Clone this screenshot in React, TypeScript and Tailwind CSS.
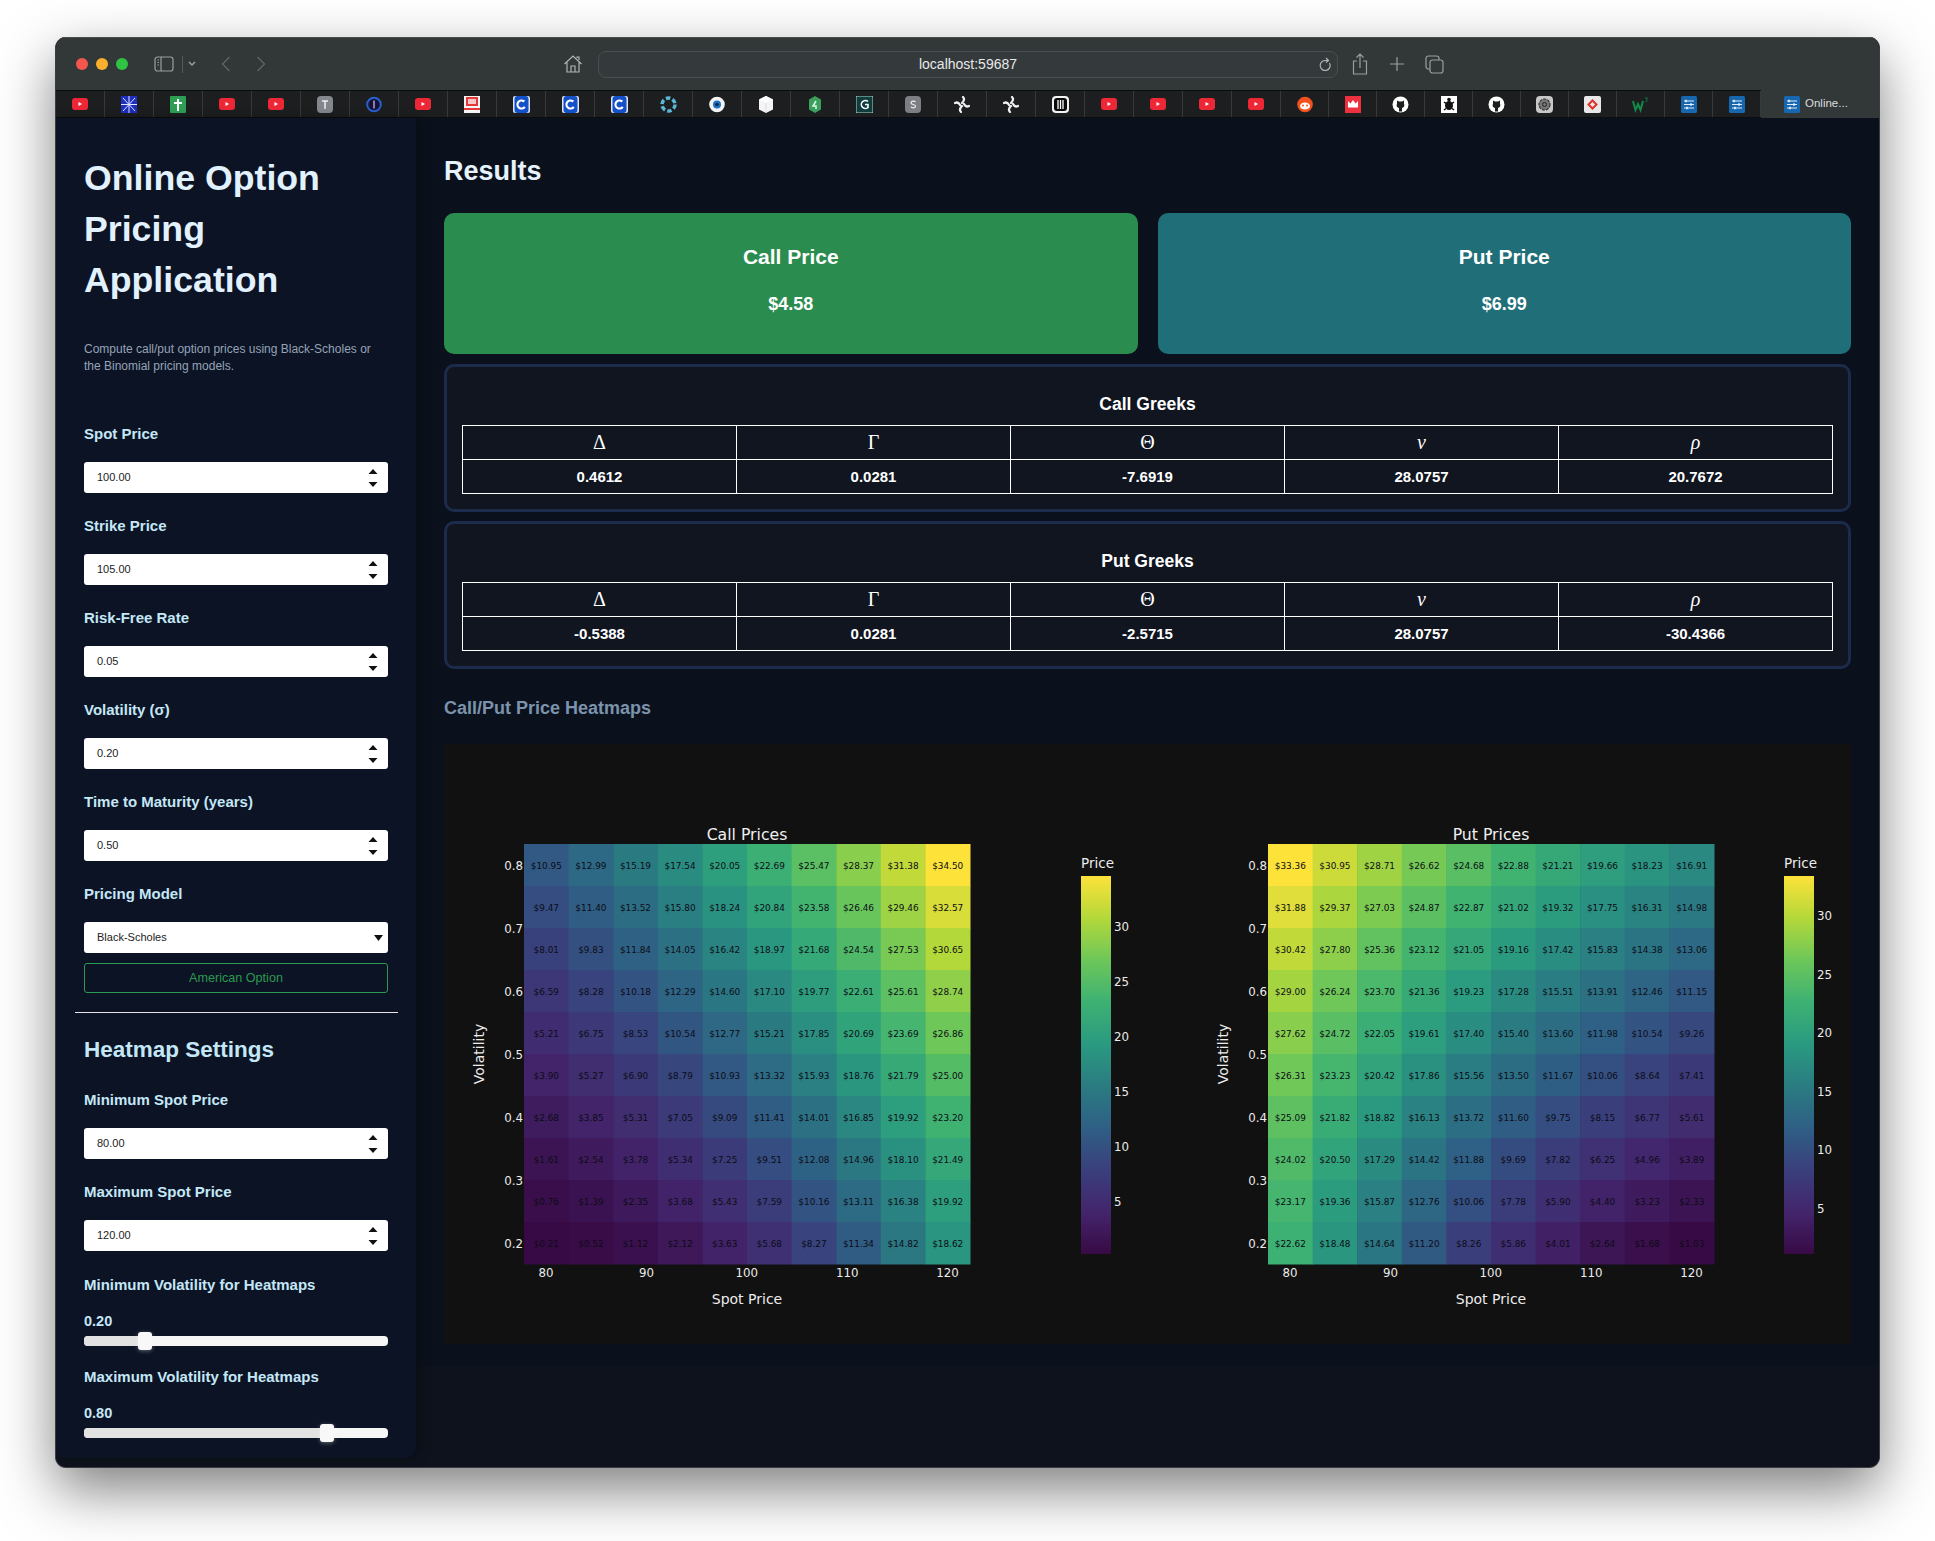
import * as React from "react";

const SANS = "font-['Liberation_Sans',Arial,sans-serif]";

const callRows = [
  [10.95, 12.99, 15.19, 17.54, 20.05, 22.69, 25.47, 28.37, 31.38, 34.5],
  [9.47, 11.4, 13.52, 15.8, 18.24, 20.84, 23.58, 26.46, 29.46, 32.57],
  [8.01, 9.83, 11.84, 14.05, 16.42, 18.97, 21.68, 24.54, 27.53, 30.65],
  [6.59, 8.28, 10.18, 12.29, 14.6, 17.1, 19.77, 22.61, 25.61, 28.74],
  [5.21, 6.75, 8.53, 10.54, 12.77, 15.21, 17.85, 20.69, 23.69, 26.86],
  [3.9, 5.27, 6.9, 8.79, 10.93, 13.32, 15.93, 18.76, 21.79, 25.0],
  [2.68, 3.85, 5.31, 7.05, 9.09, 11.41, 14.01, 16.85, 19.92, 23.2],
  [1.61, 2.54, 3.78, 5.34, 7.25, 9.51, 12.08, 14.96, 18.1, 21.49],
  [0.76, 1.39, 2.35, 3.68, 5.43, 7.59, 10.16, 13.11, 16.38, 19.92],
  [0.21, 0.52, 1.12, 2.12, 3.63, 5.68, 8.27, 11.34, 14.82, 18.62],
];

const putRows = [
  [33.36, 30.95, 28.71, 26.62, 24.68, 22.88, 21.21, 19.66, 18.23, 16.91],
  [31.88, 29.37, 27.03, 24.87, 22.87, 21.02, 19.32, 17.75, 16.31, 14.98],
  [30.42, 27.8, 25.36, 23.12, 21.05, 19.16, 17.42, 15.83, 14.38, 13.06],
  [29.0, 26.24, 23.7, 21.36, 19.23, 17.28, 15.51, 13.91, 12.46, 11.15],
  [27.62, 24.72, 22.05, 19.61, 17.4, 15.4, 13.6, 11.98, 10.54, 9.26],
  [26.31, 23.23, 20.42, 17.86, 15.56, 13.5, 11.67, 10.06, 8.64, 7.41],
  [25.09, 21.82, 18.82, 16.13, 13.72, 11.6, 9.75, 8.15, 6.77, 5.61],
  [24.02, 20.5, 17.29, 14.42, 11.88, 9.69, 7.82, 6.25, 4.96, 3.89],
  [23.17, 19.36, 15.87, 12.76, 10.06, 7.78, 5.9, 4.4, 3.23, 2.33],
  [22.62, 18.48, 14.64, 11.2, 8.26, 5.86, 4.01, 2.64, 1.68, 1.03],
];

// viridis as it appears in the screenshot
const ramp: [number, number, number][] = [
  [0x38, 0x0a, 0x45],
  [0x43, 0x25, 0x6c],
  [0x3a, 0x3f, 0x7c],
  [0x2f, 0x5f, 0x85],
  [0x2a, 0x7c, 0x82],
  [0x2a, 0x9a, 0x80],
  [0x3d, 0xb1, 0x73],
  [0x6d, 0xc7, 0x59],
  [0xb4, 0xd8, 0x3a],
  [0xfd, 0xe2, 0x3a],
];

function viridis(t: number) {
  const p = Math.max(0, Math.min(1, t)) * (ramp.length - 1);
  const i = Math.min(Math.floor(p), ramp.length - 2);
  const f = p - i;
  const c = ramp[i].map((v, k) => Math.round(v + (ramp[i + 1][k] - v) * f));
  return `rgb(${c[0]},${c[1]},${c[2]})`;
}

const CELL_W = 44.6;
const CELL_H = 42;
const chartFont = "'DejaVu Sans', Verdana, sans-serif";

function Heatmap({
  x,
  barX,
  title,
  rows,
  id,
}: {
  x: number;
  barX: number;
  title: string;
  rows: number[][];
  id: string;
}) {
  const all = rows.flat();
  const min = Math.min(...all);
  const max = Math.max(...all);
  const top = 100;
  const midX = x + CELL_W * 5;
  return (
    <g fontFamily={chartFont}>
      <text x={midX} y={90} textAnchor="middle" dominantBaseline="central" fontSize={15.7} fill="#f0f0f0">
        {title}
      </text>
      {rows.map((row, r) =>
        row.map((v, c) => (
          <g key={`${r}-${c}`}>
            <rect
              x={x + c * CELL_W}
              y={top + r * CELL_H}
              width={CELL_W + 0.5}
              height={CELL_H + 0.5}
              fill={viridis((v - min) / (max - min))}
            />
            <text
              x={x + c * CELL_W + CELL_W / 2}
              y={top + r * CELL_H + 22}
              textAnchor="middle"
              dominantBaseline="central"
              fontSize={8.9}
              fill="#0c0c16"
            >
              ${v.toFixed(2)}
            </text>
          </g>
        ))
      )}
      {["0.8", "0.7", "0.6", "0.5", "0.4", "0.3", "0.2"].map((t, i) => (
        <text key={t} x={x - 1} y={122 + i * 63} textAnchor="end" dominantBaseline="central" fontSize={11.8} fill="#ececec">
          {t}
        </text>
      ))}
      {["80", "90", "100", "110", "120"].map((t, i) => (
        <text key={t} x={x + 22 + i * 100.4} y={529} textAnchor="middle" dominantBaseline="central" fontSize={11.8} fill="#ececec">
          {t}
        </text>
      ))}
      <text x={midX} y={555} textAnchor="middle" dominantBaseline="central" fontSize={14} fill="#ececec">
        Spot Price
      </text>
      <text
        x={x - 45}
        y={310}
        textAnchor="middle"
        dominantBaseline="central"
        fontSize={14}
        fill="#ececec"
        transform={`rotate(-90 ${x - 45} 310)`}
      >
        Volatility
      </text>
      <text x={barX} y={119} dominantBaseline="central" fontSize={13.5} fill="#ececec">
        Price
      </text>
      <rect x={barX} y={132} width={30} height={378} fill={`url(#${id})`} />
      <defs>
        <linearGradient id={id} x1="0" y1="1" x2="0" y2="0">
          {ramp.map((c, i) => (
            <stop key={i} offset={i / (ramp.length - 1)} stopColor={`rgb(${c[0]},${c[1]},${c[2]})`} />
          ))}
        </linearGradient>
      </defs>
      {[30, 25, 20, 15, 10, 5].map((v) => (
        <text
          key={v}
          x={barX + 33}
          y={511 - ((v - min) / (max - min)) * 378}
          dominantBaseline="central"
          fontSize={11.8}
          fill="#ececec"
        >
          {v}
        </text>
      ))}
    </g>
  );
}

const yt = (
  <svg width="16" height="12" viewBox="0 0 16 12">
    <rect width="16" height="12" rx="3" fill="#ee2736" />
    <path d="M6.5 4l3.5 2-3.5 2z" fill="#fff" />
  </svg>
);

const cIcon = (
  <svg width="17" height="17" viewBox="0 0 17 17">
    <rect width="17" height="17" rx="2" fill="#dfe5f2" />
    <rect x="1.5" width="14" height="17" rx="3" fill="#1450c8" />
    <circle cx="8.5" cy="8.5" r="4" fill="none" stroke="#fff" strokeWidth="2.2" strokeDasharray="19 6" transform="rotate(35 8.5 8.5)" />
  </svg>
);

const github = (
  <svg width="17" height="17" viewBox="0 0 17 17">
    <circle cx="8.5" cy="8.5" r="8" fill="#fff" />
    <path d="M5 4.5l2 1h3l2-1v3.2c1 2.3-.5 4-2 4.3v3.5H7v-3.5c-1.500-.3-3-2-2-4.300z" fill="#1c1e1f" />
  </svg>
);

const sliders = (
  <svg width="16" height="17" viewBox="0 0 16 17">
    <rect width="16" height="17" rx="1.500" fill="#1667b0" />
    <path d="M3 5h10M3 8.500h10M3 12h10" stroke="#dcebf8" strokeWidth="1.200" />
    <path d="M5 3.800v2.400M10 7.300v2.400M6 10.800v2.400" stroke="#fff" strokeWidth="1.400" />
  </svg>
);

const swirl = (
  <svg width="16" height="17" viewBox="0 0 16 17">
    <path
      d="M9 1c2 2 1 4-1 6M7 16c-2-2-1-4 1-6M1 7c2-1 4 0 5 2M15 10c-2 1-4 0-5-2"
      fill="none"
      stroke="#f2f2f2"
      strokeWidth="2.200"
      strokeLinecap="round"
    />
  </svg>
);

const favicons: React.ReactNode[] = [
  yt,
  <svg width="16" height="17" viewBox="0 0 16 17" key="star">
    <rect width="16" height="17" fill="#1f2fc0" />
    <path d="M8 0v17M0 8.500h16M2 2l12 13M14 2L2 15" stroke="#dfe6ff" strokeWidth="1" />
  </svg>,
  <svg width="16" height="17" viewBox="0 0 16 17" key="cross">
    <rect width="16" height="17" rx="1" fill="#2f9e55" />
    <path d="M8 3v12M4 7h8" stroke="#fff" strokeWidth="2" />
  </svg>,
  yt,
  yt,
  <svg width="16" height="17" viewBox="0 0 16 17" key="t">
    <rect width="16" height="17" rx="4" fill="#85878f" />
    <path d="M5 5h6M8 5v8" stroke="#eee" strokeWidth="1.500" />
  </svg>,
  <svg width="16" height="17" viewBox="0 0 16 17" key="i">
    <circle cx="8" cy="8.500" r="6.800" fill="#151238" stroke="#2a5fd0" strokeWidth="2" />
    <path d="M8 4.500v8" stroke="#d9c9ff" strokeWidth="1.200" />
  </svg>,
  yt,
  <svg width="16" height="17" viewBox="0 0 16 17" key="pc">
    <rect width="16" height="17" fill="#f4f4f4" />
    <rect x="2" y="1" width="12" height="9" fill="#e53838" />
    <rect x="4" y="3" width="8" height="5" fill="#f8c8c8" />
    <rect y="12" width="16" height="2" fill="#e53838" />
  </svg>,
  cIcon,
  cIcon,
  cIcon,
  <svg width="17" height="17" viewBox="0 0 17 17" key="dots">
    <circle cx="8.500" cy="8.500" r="6.500" fill="none" stroke="#5cb7d6" strokeWidth="3.500" strokeDasharray="4.500 2.300" />
  </svg>,
  <svg width="16" height="17" viewBox="0 0 16 17" key="eye">
    <circle cx="8" cy="8.500" r="7.800" fill="#f3f3f3" />
    <circle cx="8" cy="8.500" r="4" fill="#1d74c4" />
    <circle cx="8" cy="8.500" r="1.800" fill="#0b2a4a" />
  </svg>,
  <svg width="16" height="17" viewBox="0 0 16 17" key="cube">
    <path d="M8 0l7 3.500v10L8 17l-7-3.500v-10z" fill="#f4f4f4" />
    <path d="M8 7l7-3.500L8 0 1 3.500z" fill="#fff" />
    <path d="M8 7v10" stroke="#cfcfcf" strokeWidth=".6" />
  </svg>,
  <svg width="16" height="17" viewBox="0 0 16 17" key="hex">
    <path d="M8 0l6 3.500v10L8 17l-6-3.500v-10z" fill="#3b9f5e" />
    <path d="M9 5l-3 5h3v3" fill="none" stroke="#dff5e6" strokeWidth="1.500" />
  </svg>,
  <svg width="17" height="17" viewBox="0 0 17 17" key="g">
    <rect width="17" height="17" rx="1" fill="#0f3d3e" stroke="#dfe" strokeWidth=".8" />
    <path d="M12 5.500A4 4 0 1 0 12 11.500V8.500H9" fill="none" stroke="#fff" strokeWidth="1.600" />
  </svg>,
  <svg width="16" height="17" viewBox="0 0 16 17" key="s">
    <rect width="16" height="17" rx="4" fill="#7c7e85" />
    <path d="M10.500 6c-1-1.300-4.500-1.300-4.500.7 0 2.300 4.500 1.300 4.500 3.600 0 1.900-3.500 1.900-4.700.6" fill="none" stroke="#eee" strokeWidth="1.200" />
  </svg>,
  swirl,
  swirl,
  <svg width="17" height="17" viewBox="0 0 17 17" key="m">
    <rect width="17" height="17" rx="4" fill="#f3f3f3" />
    <rect x="2" y="2" width="13" height="13" rx="3" fill="#0a0a0a" />
    <path d="M6 4v9M8.500 4v9M11 4v9" stroke="#fff" strokeWidth="1.300" />
  </svg>,
  yt,
  yt,
  yt,
  yt,
  <svg width="16" height="17" viewBox="0 0 16 17" key="reddit">
    <circle cx="8" cy="8.500" r="7.800" fill="#f4501e" />
    <ellipse cx="8" cy="10" rx="5" ry="3.600" fill="#fff" />
    <circle cx="6" cy="9.500" r="1" fill="#f4501e" />
    <circle cx="10" cy="9.500" r="1" fill="#f4501e" />
  </svg>,
  <svg width="16" height="17" viewBox="0 0 16 17" key="crown">
    <rect width="16" height="17" fill="#ee3140" />
    <path d="M3 5l2.500 2.500L8 4l2.500 3.500L13 5v6.500H3z" fill="#fff" />
  </svg>,
  github,
  <svg width="16" height="17" viewBox="0 0 16 17" key="turtle">
    <rect width="16" height="17" fill="#fff" />
    <ellipse cx="8" cy="9.500" rx="4" ry="4.500" fill="#111" />
    <circle cx="8" cy="3.500" r="1.800" fill="#111" />
    <path d="M3 6l2 1.500M13 6l-2 1.500M3 14l2-1.500M13 14l-2-1.500" stroke="#111" strokeWidth="1.500" />
  </svg>,
  github,
  <svg width="17" height="17" viewBox="0 0 17 17" key="gpt">
    <rect width="17" height="17" rx="4" fill="#c8c8c8" />
    <circle cx="8.500" cy="8.500" r="5.500" fill="#777" stroke="#333" strokeWidth="1.200" strokeDasharray="3 1" />
    <circle cx="8.500" cy="8.500" r="2" fill="none" stroke="#222" strokeWidth="1" />
  </svg>,
  <svg width="17" height="17" viewBox="0 0 17 17" key="diamond">
    <rect width="17" height="17" rx="2" fill="#e8e8e8" />
    <path d="M8.500 4.500l4 4-4 4-4-4z" fill="none" stroke="#e0322c" strokeWidth="2" />
  </svg>,
  <svg width="17" height="17" viewBox="0 0 17 17" key="w3">
    <path d="M1 5l2.500 9 2.500-6 2.500 6L11 5" fill="none" stroke="#128a4a" strokeWidth="2" />
    <path d="M13 2h2.500l-1.200 1.500c1.500.3 1 2.500-.8 2" fill="none" stroke="#128a4a" strokeWidth=".8" />
  </svg>,
  sliders,
  sliders,
];

function ChromeIcon({ children, w = 20, h = 20 }: { children: React.ReactNode; w?: number; h?: number }) {
  return (
    <svg width={w} height={h} viewBox={`0 0 ${w} ${h}`} fill="none" stroke="#9a9e9f" strokeWidth="1.200">
      {children}
    </svg>
  );
}

function BrowserChrome() {
  return (
    <>
      <div className="flex h-[53px] items-center bg-[#323738] border-t border-[#4a4e4f] pl-[20px] shrink-0 relative">
        <span className="w-3 h-3 rounded-full bg-[#f5564e]" />
        <span className="w-3 h-3 rounded-full bg-[#f9b02e] ml-2" />
        <span className="w-3 h-3 rounded-full bg-[#2fc243] ml-2" />
        <span className="ml-[26px] flex">
          <ChromeIcon w={20} h={16}>
            <rect x="1" y="1" width="18" height="14" rx="2.500" />
            <path d="M7 1v14M3.500 4h1.500M3.500 6.500h1.500M3.500 9h1.500" />
          </ChromeIcon>
        </span>
        <span className="ml-[8px] w-px h-[17px] bg-[#55595a]" />
        <span className="ml-[5px] flex">
          <ChromeIcon w={8} h={6}>
            <path d="M1 1l3 3 3-3" strokeWidth="1.500" />
          </ChromeIcon>
        </span>
        <span className="ml-[25px] flex">
          <ChromeIcon w={10} h={16}>
            <path d="M8.500 1L1.500 8l7 7" stroke="#636768" />
          </ChromeIcon>
        </span>
        <span className="ml-[25px] flex">
          <ChromeIcon w={10} h={16}>
            <path d="M1.500 1l7 7-7 7" stroke="#636768" />
          </ChromeIcon>
        </span>
        <span className="ml-[297px] flex">
          <ChromeIcon w={20} h={18}>
            <path d="M1.500 9L10 1l8.500 8M4 7.500V17h12V7.500M8 17v-6h4v6M14 3V2h2v3" stroke="#b0b3b4" />
          </ChromeIcon>
        </span>
        <div className="ml-[15px] w-[740px] h-[27px] rounded-[8px] border border-[#4a4e4f] bg-[#343a3b] flex items-center justify-center relative">
          <span className={`${SANS} text-[14px] text-[#e8e8e8]`}>localhost:59687</span>
          <span className="absolute right-[5px] top-[4px] flex">
            <ChromeIcon w={14} h={17}>
              <path d="M11.500 7A5 5 0 1 1 7 4.500h3M8 2l2.500 2.500L8 6.500" stroke="#b0b3b4" />
            </ChromeIcon>
          </span>
        </div>
        <span className="ml-[14px] flex">
          <ChromeIcon w={16} h={22}>
            <path d="M5 8H1.500v13h13V8H11M8 15V1.500M4.500 4.500L8 1l3.500 3.500" />
          </ChromeIcon>
        </span>
        <span className="ml-[21px] flex">
          <ChromeIcon w={16} h={16}>
            <path d="M8 1v14M1 8h14" />
          </ChromeIcon>
        </span>
        <span className="ml-[20px] flex">
          <ChromeIcon w={19} h={19}>
            <rect x="1" y="1" width="13" height="13" rx="2.500" />
            <rect x="5" y="5" width="13" height="13" rx="2.500" fill="#323738" />
          </ChromeIcon>
        </span>
      </div>
      <div className="flex h-[28px] bg-[#1c1e1f] border-y border-[#0b0c0c] shrink-0">
        {favicons.map((icon, i) => (
          <div
            key={i}
            className={`${i < 25 ? "w-[49px]" : "w-[48px]"} flex items-center justify-center border-r border-[#37393a] shrink-0`}
          >
            {icon}
          </div>
        ))}
        <div className="flex-1 bg-[#323738] flex items-center pl-[23px] gap-[5px] -my-px">
          {sliders}
          <span className={`${SANS} text-[11.5px] text-[#dcdcdc]`}>Online...</span>
        </div>
      </div>
    </>
  );
}

function FieldLabel({ children }: { children: React.ReactNode }) {
  return <div className="h-5 leading-[18px] text-[15px] font-bold text-[#c4e7f7] whitespace-nowrap">{children}</div>;
}

function NumberField({ label, value }: { label: string; value: string }) {
  return (
    <div className="mb-6">
      <FieldLabel>{label}</FieldLabel>
      <div className="mt-[17px] h-[31px] bg-white rounded-[3px] flex items-center justify-between pl-[13px] pr-[10px]">
        <span className="text-[11px] text-[#222]">{value}</span>
        <svg width="10" height="20" viewBox="0 0 10 20" fill="#111">
          <path d="M5 1l4.500 5h-9zM5 19l4.500-5h-9z" />
        </svg>
      </div>
    </div>
  );
}

function Slider({ label, value }: { label: string; value: number }) {
  return (
    <div className="mb-[21px]">
      <div className="h-5 leading-5 text-[15px] font-bold text-[#c4e7f7] whitespace-nowrap">{label}</div>
      <div className="mt-[16px] h-[20px] leading-5 text-[14.5px] font-bold text-[#c4e7f7]">{value.toFixed(2)}</div>
      <div className="relative mt-[5px] h-[10px] rounded-[4px] bg-[#f6f6f6]">
        <div className="h-full rounded-l-[4px] bg-[#e2e2e2]" style={{ width: `${value * 100}%` }} />
        <div
          className="absolute -top-[4px] w-[14px] h-[18px] -ml-[7px] rounded-[3px] bg-[#f8f8f8] shadow-[0_1px_4px_rgba(255,255,255,0.35)]"
          style={{ left: `${value * 100}%` }}
        />
      </div>
    </div>
  );
}

function Sidebar() {
  return (
    <aside className={`${SANS} w-[360px] shrink-0 h-[1340px] bg-[#0c1324] rounded-b-[10px] pt-[35px] px-[28px] shadow-[4px_0_12px_rgba(0,0,0,0.3)] z-10`}>
      <h1 className="text-[35.7px] leading-[51px] font-bold text-[#e1f1fd]">
        Online Option
        <br />
        Pricing
        <br />
        Application
      </h1>
      <p className="mt-[35px] text-[12px] leading-[17px] text-[#94a3b8]">
        Compute call/put option prices using Black-Scholes or
        <br />
        the Binomial pricing models.
      </p>
      <div className="mt-[50px]">
        <NumberField label="Spot Price" value="100.00" />
        <NumberField label="Strike Price" value="105.00" />
        <NumberField label="Risk-Free Rate" value="0.05" />
        <NumberField label="Volatility (σ)" value="0.20" />
        <NumberField label="Time to Maturity (years)" value="0.50" />
        <FieldLabel>Pricing Model</FieldLabel>
        <div className="mt-[17px] h-[31px] bg-white rounded-[3px] flex items-center justify-between pl-[13px] pr-[5px]">
          <span className="text-[11px] text-[#222]">Black-Scholes</span>
          <svg width="9" height="6" viewBox="0 0 9 6" fill="#111">
            <path d="M0 0h9L4.500 6z" />
          </svg>
        </div>
        <div className="mt-[10px] h-[30px] rounded-[3px] border border-[#2a9a50] flex items-center justify-center text-[12.6px] text-[#2a9a50]">
          American Option
        </div>
        <div className="mt-[19px] -ml-[9px] -mr-[10px] h-px bg-[#e5e5e5]" />
        <h2 className="mt-[23px] h-7 leading-7 text-[22.5px] font-bold text-[#c4e7f7]">Heatmap Settings</h2>
        <div className="mt-[27px]">
          <NumberField label="Minimum Spot Price" value="80.00" />
          <NumberField label="Maximum Spot Price" value="120.00" />
          <Slider label="Minimum Volatility for Heatmaps" value={0.2} />
          <Slider label="Maximum Volatility for Heatmaps" value={0.8} />
        </div>
      </div>
    </aside>
  );
}

function GreeksCard({ title, values }: { title: string; values: string[] }) {
  const symbols: [string, string][] = [
    ["Δ", ""],
    ["Γ", ""],
    ["Θ", ""],
    ["ν", "italic"],
    ["ρ", "italic"],
  ];
  return (
    <section className="h-[148px] rounded-[10px] border-[3px] border-[#1c2b4c] bg-[#10151f] px-[15px] pt-[27px]">
      <h3 className="h-5 leading-5 text-center text-[17.500px] font-bold text-white">{title}</h3>
      <table className="mt-[11px] w-full table-fixed border-collapse text-white">
        <tbody>
          <tr className="h-[34px]">
            {symbols.map(([s, style]) => (
              <td key={s} className={`border border-white pb-[2px] text-center text-[20px] leading-none font-['Liberation_Serif',serif] ${style}`}>
                {s}
              </td>
            ))}
          </tr>
          <tr className="h-[34px]">
            {values.map((v, i) => (
              <td key={i} className="border border-white pt-[2px] text-center text-[15px] font-bold">
                {v}
              </td>
            ))}
          </tr>
        </tbody>
      </table>
    </section>
  );
}

function PriceCard({ title, value, className }: { title: string; value: string; className: string }) {
  return (
    <div className={`flex-1 h-[141px] rounded-[10px] flex flex-col items-center text-white font-bold pt-[32px] ${className}`}>
      <div className="h-6 leading-6 text-[21px]">{title}</div>
      <div className="mt-[23px] h-6 leading-6 text-[18px]">{value}</div>
    </div>
  );
}

export default function App() {
  return (
    <div className="w-[1935px] h-[1541px] bg-white pl-[55px] pt-[37px] overflow-hidden">
      <div className="w-[1825px] h-[1431px] rounded-[11px] bg-[#10131a] border-x border-b border-[#3a3d40] flex flex-col overflow-hidden shadow-[0_22px_55px_rgba(0,0,0,0.5)]">
        <BrowserChrome />
        <div className="flex flex-1 min-h-0 bg-[#0d121c]">
          <Sidebar />
          <main className={`${SANS} flex-1 min-w-0 h-[1248px] bg-[#0b111c] rounded-b-[10px] px-[28px] pt-[37px]`}>
            <h2 className="h-8 leading-8 text-[27px] font-bold text-[#e6f3fc]">Results</h2>
            <div className="mt-[26px] flex gap-[20px]">
              <PriceCard title="Call Price" value="$4.58" className="bg-[#2a8c4e]" />
              <PriceCard title="Put Price" value="$6.99" className="bg-[#1f6e78]" />
            </div>
            <div className="mt-[10px] flex flex-col gap-[9px]">
              <GreeksCard title="Call Greeks" values={["0.4612", "0.0281", "-7.6919", "28.0757", "20.7672"]} />
              <GreeksCard title="Put Greeks" values={["-0.5388", "0.0281", "-2.5715", "28.0757", "-30.4366"]} />
            </div>
            <h3 className="mt-[27px] h-6 leading-6 text-[18px] font-bold text-[#7b93ad]">Call/Put Price Heatmaps</h3>
            <div className="mt-[24px] h-[600px] bg-[#111111]">
              <svg width="1406" height="600" viewBox="0 0 1406 600">
                <Heatmap x={80} barX={637} title="Call Prices" rows={callRows} id="bar-call" />
                <Heatmap x={824} barX={1340} title="Put Prices" rows={putRows} id="bar-put" />
              </svg>
            </div>
          </main>
        </div>
      </div>
    </div>
  );
}
